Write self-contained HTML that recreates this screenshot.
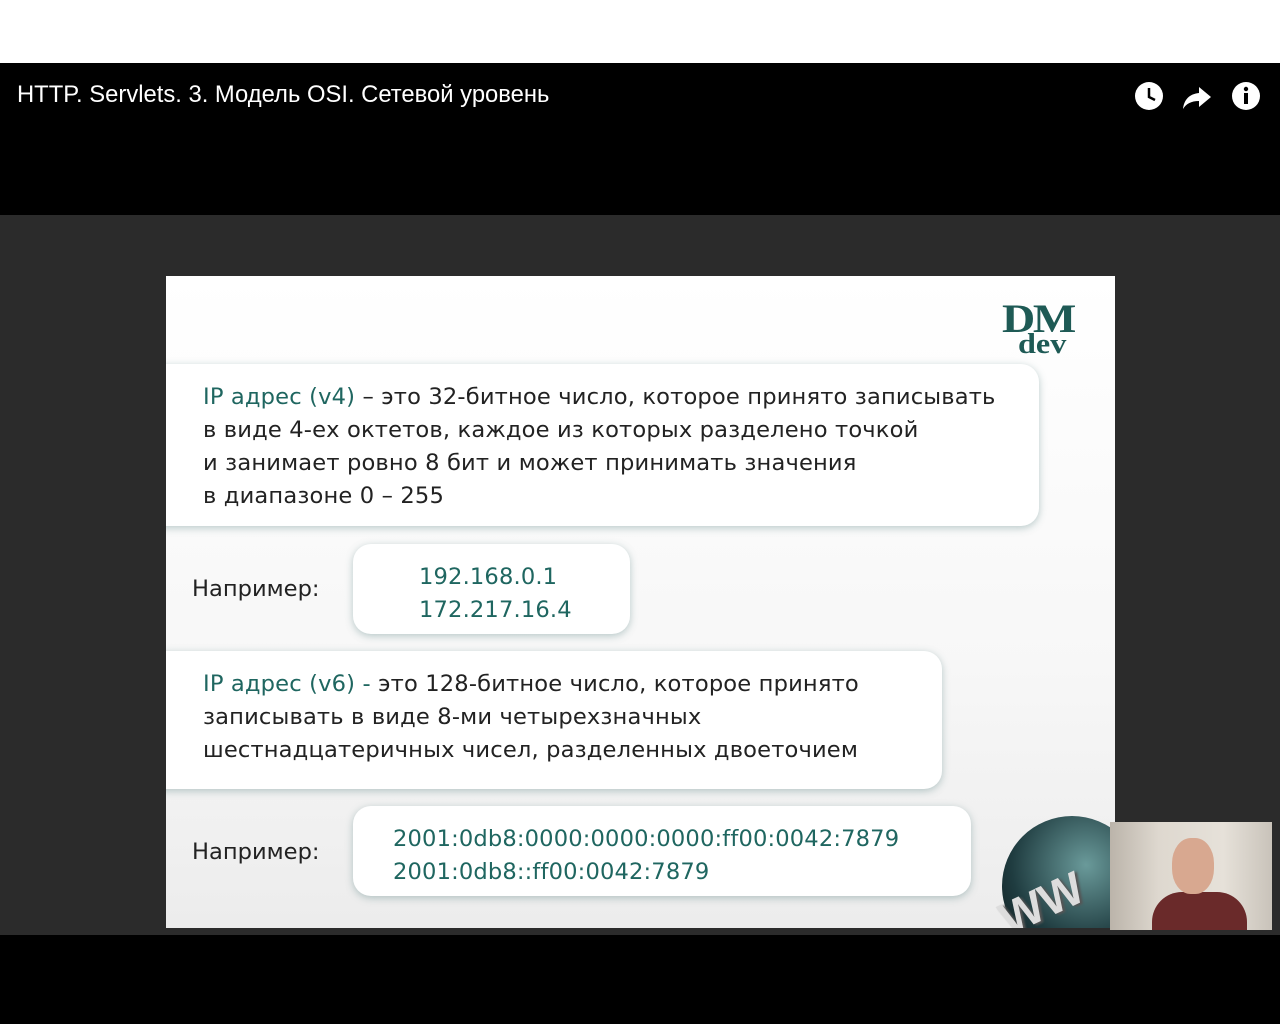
<!DOCTYPE html>
<html><head><meta charset="utf-8"><style>
*{margin:0;padding:0;box-sizing:border-box}
body{width:1280px;height:1024px;background:#000;position:relative;overflow:hidden;font-family:"Liberation Sans","DejaVu Sans",sans-serif}
.top{position:absolute;left:0;top:0;width:1280px;height:63px;background:#fff}
.title{position:absolute;left:17px;top:81px;color:#fff;font-size:23.8px}
.gray{position:absolute;left:0;top:215px;width:1280px;height:720px;background:#2b2b2b}
.slide{position:absolute;left:166px;top:276px;width:949px;height:652px;background:linear-gradient(#fff,#f7f7f7 60%,#ececec);overflow:hidden}
.box{position:absolute;background:#fff;border-radius:18px;box-shadow:0 2px 8px rgba(60,110,110,.35);font-family:"DejaVu Sans",sans-serif;font-size:22.6px;letter-spacing:.15px;color:#222;line-height:33px}
.t{color:#1f6660}
.lbl{position:absolute;font-family:"DejaVu Sans",sans-serif;font-size:22.6px;color:#222}
.ic{position:absolute;top:81px}
</style></head><body>
<div class="top"></div>
<div class="title">HTTP. Servlets. 3. Модель OSI. Сетевой уровень</div>
<svg class="ic" style="left:1134px" width="30" height="30" viewBox="0 0 30 30"><circle cx="15" cy="15" r="14" fill="#fff"/><path d="M15 7v9l6 3" stroke="#000" stroke-width="2.5" fill="none"/></svg>
<svg class="ic" style="left:1182px" width="30" height="30" viewBox="0 0 30 30"><path d="M17 6l12 10-12 10v-6C9 20 4 23 1 28c1-9 6-15 16-16z" fill="#fff"/></svg>
<svg class="ic" style="left:1231px" width="30" height="30" viewBox="0 0 30 30"><circle cx="15" cy="15" r="14" fill="#fff"/><rect x="13" y="12" width="4" height="11" fill="#000"/><circle cx="15" cy="8" r="2.2" fill="#000"/></svg>
<div class="gray"></div>
<div class="slide">
<div style="position:absolute;left:836px;top:26px;font-family:'Liberation Serif',serif;color:#1e5a55;font-weight:bold;font-size:40px;line-height:34px;letter-spacing:-2px;transform:scaleX(1.15);transform-origin:left">DM</div>
<div style="position:absolute;left:852px;top:56px;font-family:'Liberation Serif',serif;color:#1e5a55;font-weight:bold;font-size:28px;line-height:26px;transform:scaleX(1.15);transform-origin:left">dev</div>
<div class="box" style="left:-20px;top:88px;width:893px;height:162px;padding:17px 0 0 57px"><span class="t">IP адрес (v4)</span> – это 32-битное число, которое принято записывать<br>в виде 4-ех октетов, каждое из которых разделено точкой<br>и занимает ровно 8 бит и может принимать значения<br>в диапазоне 0 – 255</div>
<div class="lbl" style="left:26px;top:300px">Например:</div>
<div class="box t" style="left:187px;top:268px;width:277px;height:90px;padding:17px 0 0 66px;color:#1f6660">192.168.0.1<br>172.217.16.4</div>
<div class="box" style="left:-20px;top:375px;width:796px;height:138px;padding:17px 0 0 57px"><span class="t">IP адрес (v6) -</span> это 128-битное число, которое принято<br>записывать в виде 8-ми четырехзначных<br>шестнадцатеричных чисел, разделенных двоеточием</div>
<div class="lbl" style="left:26px;top:563px">Например:</div>
<div class="box" style="left:187px;top:530px;width:618px;height:90px;padding:17px 0 0 40px;color:#1f6660">2001:0db8:0000:0000:0000:ff00:0042:7879<br>2001:0db8::ff00:0042:7879</div>
<div style="position:absolute;left:836px;top:540px;width:140px;height:140px;border-radius:50%;background:radial-gradient(circle at 60% 35%,#6a9a9a,#1f3c40 60%,#0a1214)"></div>
<div style="position:absolute;left:832px;top:600px;font-weight:bold;font-size:46px;color:#ddd;transform:rotate(-25deg);text-shadow:2px 2px 2px #555">WW</div>
</div>
<div style="position:absolute;left:1110px;top:822px;width:162px;height:108px;background:linear-gradient(90deg,#bbb4aa,#ded8cf 30%,#e6e1d9 70%,#c9c3ba);overflow:hidden">
<div style="position:absolute;left:42px;top:70px;width:95px;height:38px;background:#6a2a2a;border-radius:30px 30px 0 0"></div>
<div style="position:absolute;left:62px;top:16px;width:42px;height:56px;background:#d8a890;border-radius:45%"></div>
</div>
</body></html>
